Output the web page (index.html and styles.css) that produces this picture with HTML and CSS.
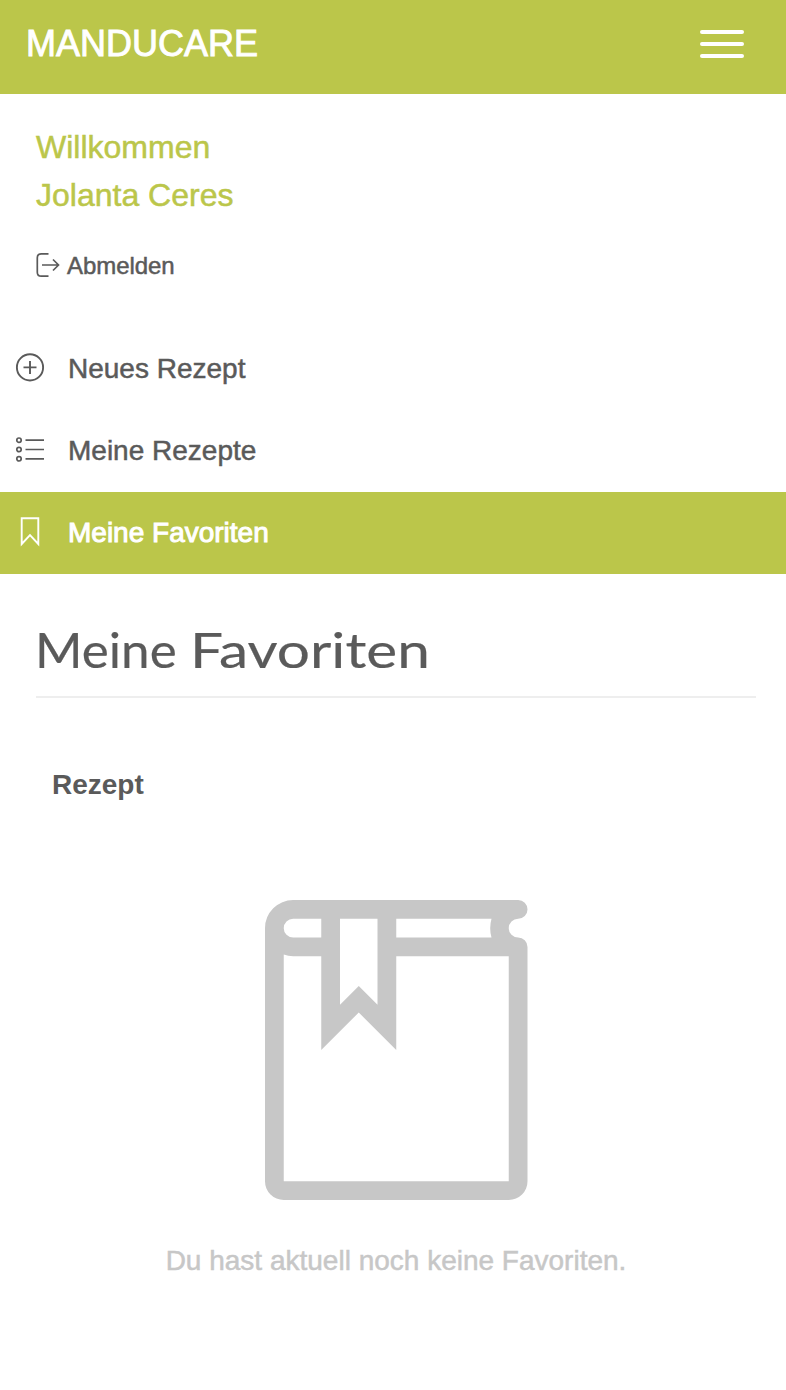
FILE: index.html
```
<!DOCTYPE html>
<html lang="de">
<head>
<meta charset="utf-8">
<title>Manducare</title>
<link rel="stylesheet" href="styles.css">
</head>
<body>
<header class="topbar">
  <span class="brand">MANDUCARE</span>
  <button class="menu-toggle" aria-label="Menü"><span class="bar"></span><span class="bar"></span><span class="bar"></span></button>
</header>
<section class="welcome">
  <div class="greeting">Willkommen<br>Jolanta Ceres</div>
  <a class="logout">
    <svg width="24" height="26" viewBox="0 0 24 26" fill="none" stroke="currentColor" stroke-width="1.7"><path d="M12.5 1.8H5.3Q1.3 1.8 1.3 5.8V20.2Q1.3 24.2 5.3 24.2H12.5M6 13H22.5M17 7.5L22.5 13L17 18.5"/></svg>
    <span>Abmelden</span>
  </a>
</section>
<nav class="nav">
  <a class="nav-item">
    <svg class="nav-icon" width="30" height="30" viewBox="0 0 30 30" fill="none" stroke="currentColor" stroke-width="1.9"><circle cx="15" cy="14.4" r="13.1"/><path d="M15 8V21M8.5 14.4H21.5"/></svg>
    <span>Neues Rezept</span>
  </a>
  <a class="nav-item">
    <svg class="nav-icon" width="30" height="30" viewBox="0 0 30 30" fill="none" stroke="currentColor" stroke-width="1.7"><circle cx="4" cy="5.2" r="2.2"/><circle cx="4" cy="14.5" r="2.2"/><circle cx="4" cy="23.8" r="2.2"/><path d="M10.5 5.2H29M10.5 14.5H29M10.5 23.8H29"/></svg>
    <span>Meine Rezepte</span>
  </a>
  <a class="nav-item active">
    <svg class="nav-icon" width="30" height="30" viewBox="0 0 30 30" fill="none" stroke="currentColor" stroke-width="1.9"><path d="M6.7 1.2H23.3V27L15 18.2L6.7 27Z"/></svg>
    <span>Meine Favoriten</span>
  </a>
</nav>
<main class="content">
  <h1 class="title"><span class="word word-first">Meine</span> <span class="word word-second">Favoriten</span></h1>
  <div class="column-head">Rezept</div>
  <div class="empty">
    <svg class="book" viewBox="0 0 14 16" fill="currentColor" fill-rule="evenodd"><path d="M1.5 0H13.5A.5 .5 0 0 1 13.5 1A.5 .5 0 0 0 13.5 2A.5 .5 0 0 1 14 2.5V15A1 1 0 0 1 13 16H1A1 1 0 0 1 0 15V1.5A1.5 1.5 0 0 1 1.5 0ZM1.5 1A.5 .5 0 0 0 1.5 2H3V1ZM4 1V5.59L5 4.59L6 5.59V1ZM7 1V2H12.08Q11.94 1.5 12.08 1ZM1 2.91V15H13V3H7V8L5 6L3 8V3H1.5Q1.24 3 1 2.91Z"/></svg>
    <p class="empty-text">Du hast aktuell noch keine Favoriten.</p>
  </div>
</main>
</body>
</html>
```
FILE: styles.css
```
* { box-sizing: border-box; }

body {
  margin: 0;
  min-height: 1390px;
  background: #fff;
  color: #5a5a5a;
  font-family: "Liberation Sans", Arial, sans-serif;
  -webkit-text-stroke: 0.5px currentColor;
}

svg { display: block; flex: none; overflow: visible; }

.topbar {
  display: flex;
  align-items: center;
  justify-content: space-between;
  height: 94px;
  padding: 0 42px 6px 26px;
  background: #bbc64a;
  color: #fff;
  -webkit-text-stroke-width: 0.9px;
}

.brand { font-size: 36px; line-height: 40px; }

.menu-toggle {
  display: flex;
  flex-direction: column;
  gap: 8px;
  width: 44px;
  padding: 0;
  border: 0;
  background: none;
}

.bar { width: 44px; height: 4px; border-radius: 2px; background: #fff; }

.welcome { height: 234px; padding: 29px 36px 0; }

.greeting {
  color: #bbc64a;
  font-size: 32px;
  line-height: 48px;
}

.logout {
  display: flex;
  align-items: center;
  gap: 7px;
  margin-top: 29px;
  font-size: 24px;
  line-height: 32px;
}

.logout span { padding-top: 2px; letter-spacing: -0.05px; }

.nav-item {
  display: flex;
  align-items: center;
  gap: 23px;
  height: 82px;
  padding-left: 15px;
  font-size: 28px;
}

.nav-icon { margin-top: -2px; }

.nav-item.active {
  background: #bbc64a;
  color: #fff;
  -webkit-text-stroke-width: 1px;
}

.content { padding: 46px 30px 0 36px; }

.title {
  display: flex;
  height: 78px;
  margin: 0;
  border-bottom: 2px solid #eee;
  font: 400 49px/58px Lato, sans-serif;
  white-space: nowrap;
  -webkit-text-stroke-width: 0.2px;
}

.word { transform-origin: left; }

/* The two words share one baseline but are widened separately. */
.word-first {
  width: 155px;
  margin-left: -1px;
  transform: scaleX(1.045);
}

.word-second { transform: scaleX(1.195); }

.column-head {
  padding: 71px 16px 0;
  font-size: 28px;
  font-weight: 700;
  line-height: 32px;
  -webkit-text-stroke: 0;
}

.empty {
  display: flex;
  flex-direction: column;
  align-items: center;
  margin-top: 99px;
  color: #c7c7c7;
}

.book { width: 262.5px; height: 300px; }

.empty-text { margin: 45px 0 0; font-size: 28px; line-height: 32px; }
```
